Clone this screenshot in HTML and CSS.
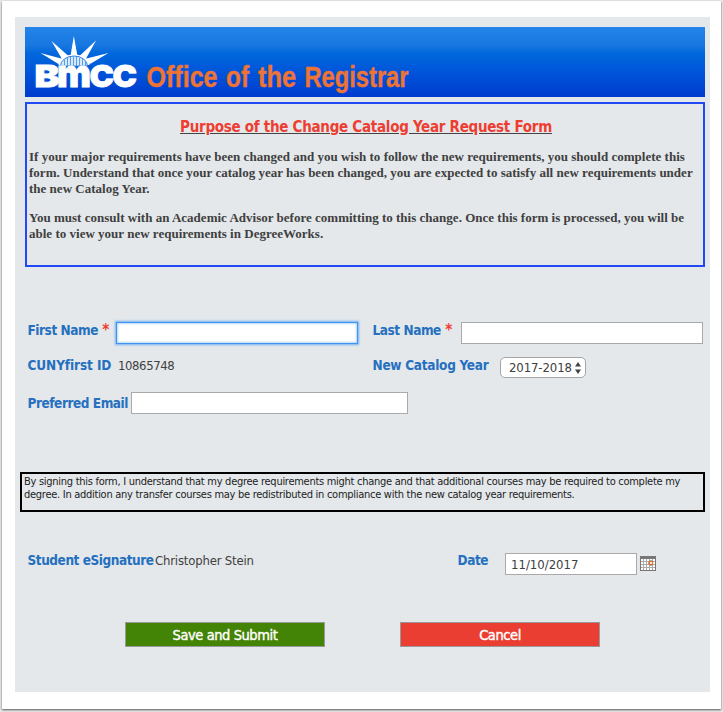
FILE: index.html
```html
<!DOCTYPE html>
<html lang="en">
<head>
<meta charset="utf-8">
<title>Change Catalog Year Request Form</title>
<link rel="stylesheet" href="styles.css">
</head>
<body>
<div class="frame">
<form class="form">
  <header class="banner">
    <svg width="680" height="70" viewBox="25 27 680 70" role="img" aria-label="BMCC Office of the Registrar">
      <g fill="#fff">
        <path d="M73.800 36 L77.500 56 H70.500Z"/>
        <path d="M51.500 41 L68.500 56 L62.500 60Z"/>
        <path d="M96 40.500 L85.500 59.500 L79.500 56Z"/>
        <path d="M40.500 53 L63 59 L58.500 64Z"/>
        <path d="M108.500 53 L90 64 L84.500 59Z"/>
        <path d="M58.500 65 A15.500 10.500 0 0 1 89.500 65Z"/>
      </g>
      <path d="M60.500 66 A13.500 10 0 0 1 87.500 66Z" fill="#d5e8fc" stroke="#2f83df" stroke-width="1"/>
      <path d="M64.500 60v6M67.500 58v8M70.500 57v9M73.500 57v9M76.500 57v9M79.500 58v8M82.500 59v7M85.500 61v5" stroke="#5a9de8" stroke-width="1"/>
      <g class="logo">
        <text x="34.500" y="87" textLength="25" lengthAdjust="spacingAndGlyphs">B</text>
        <text class="m" x="57" y="87" textLength="34" lengthAdjust="spacingAndGlyphs">m</text>
        <text x="89.500" y="87" textLength="24.500" lengthAdjust="spacingAndGlyphs">C</text>
        <text x="112.500" y="87" textLength="24.500" lengthAdjust="spacingAndGlyphs">C</text>
      </g>
      <g class="office">
        <text x="146.500" y="87" textLength="71" lengthAdjust="spacingAndGlyphs">Office</text>
        <text x="226" y="87" textLength="23" lengthAdjust="spacingAndGlyphs">of</text>
        <text x="258" y="87" textLength="38" lengthAdjust="spacingAndGlyphs">the</text>
        <text x="304.500" y="87" textLength="104" lengthAdjust="spacingAndGlyphs">Registrar</text>
      </g>
    </svg>
  </header>
  <section class="purpose">
    <h1><span>Purpose of the Change Catalog Year Request Form</span></h1>
    <p>If your major requirements have been changed and you wish to follow the new requirements, you should complete this<br>form. Understand that once your catalog year has been changed, you are expected to satisfy all new requirements under<br>the new Catalog Year.</p>
    <p>You must consult with an Academic Advisor before committing to this change. Once this form is processed, you will be<br>able to view your new requirements in DegreeWorks.</p>
  </section>
  <div class="row row-names">
    <div class="cell"><label class="w88">First Name <b class="req">*</b></label><span class="field focus"></span></div>
    <div class="cell"><label class="w88">Last Name <b class="req">*</b></label><span class="field"></span></div>
  </div>
  <div class="row row-id">
    <div class="cell"><label class="w90 cuny">CUNYfirst ID</label><span class="value number">10865748</span></div>
    <div class="cell"><label class="w127 catalog">New Catalog Year</label><span class="select">2017-2018<svg width="6" height="12" viewBox="0 0 6 12"><path d="M3 0L6 4.500H0zM3 12L0 7.500h6z" fill="#444"/></svg></span></div>
  </div>
  <div class="row row-email"><label class="w103">Preferred Email</label><span class="field email"></span></div>
  <p class="terms">By signing this form, I understand that my degree requirements might change and that additional courses may be required to complete my<br>degree. In addition any transfer courses may be redistributed in compliance with the new catalog year requirements.</p>
  <div class="row row-sign">
    <label class="w127">Student eSignature</label><span class="value signer">Christopher Stein</span>
    <label class="w47">Date</label><span class="field date">11/10/2017</span>
    <svg class="cal" width="16" height="15" viewBox="0 0 16 15"><path d="M0 0h16v15H0z" fill="#aaa"/><path d="M1 3h2v2H1zM4 3h2v2H4zM7 3h2v2H7zM1 6h2v2H1zM4 6h2v2H4zM7 6h1v2H7zM1 9h2v2H1zM4 9h2v2H4zM7 9h2v2H7zM10 10h2v1h-2zM1 12h2v2H1zM4 12h2v2H4zM7 12h2v2H7zM10 12h2v2h-2zM13 12h2v2h-2zM13 9h2v2h-2zM10 3h2v1h-2zM13 3h2v2h-2zM13 6h2v2h-2z" fill="#fff"/><path d="M0 0h16v3H0zM0 3h1v12H0zM15 3h1v12h-1zM0 14h16v1H0z" fill="#777"/><path d="M9.500 5.500h3v3h-3z" fill="#fff" stroke="#e06a20" stroke-width="1.200"/></svg>
  </div>
  <div class="row row-buttons">
    <button type="button" class="save"><span>Save and Submit</span></button>
    <button type="button" class="cancel"><span>Cancel</span></button>
  </div>
</form>
</div>
</body>
</html>
```
FILE: styles.css
```css
* { box-sizing: border-box; }
body {
  margin: 0;
  height: 712px;
  padding: 1px 2px 3px;
  background: #e9e9e9;
  font-family: Tahoma, "DejaVu Sans Condensed", "DejaVu Sans", sans-serif;
  font-stretch: condensed;
  color: #404040;
  overflow: hidden;
}
.frame {
  height: 708px;
  width: 719px;
  padding: 16px 11px 0 13px;
  background: #fff;
  box-shadow: 0 1px 2px #555;
}
.form {
  height: 675px;
  padding: 10px 5px 0 10px;
  background: #e4e8eb;
}
.banner {
  height: 70px;
  background: linear-gradient(#2484e8 0%, #1877e1 26%, #0068dc 38%, #0054d9 65%, #003bcd 100%);
}
.banner svg { display: block; }
.logo { font: 900 30.500px Inter, "Open Sans", sans-serif; fill: #fff; stroke: #fff; stroke-width: .8; }
.logo .m { font-size: 39px; }
.office {
  font: bold 30px "Liberation Sans Narrow", "Liberation Sans", sans-serif;
  fill: #ee7436;
  stroke: #ee7436;
  stroke-width: .4;
}
.purpose {
  height: 165px;
  margin-top: 5px;
  padding: 14px 2px 0;
  border: 2px solid #2149f5;
}
h1 {
  margin: 0 0 12px;
  height: 19px;
  font-size: 15px;
  line-height: 19px;
  letter-spacing: -.28px;
  text-align: center;
  color: #ee3d31;
  text-decoration: underline;
  text-decoration-color: #444;
  white-space: nowrap;
}
h1 span { margin-left: 2px; }
.purpose p {
  margin: 0 0 13px;
  font: bold 13px/16px "Liberation Serif", serif;
  letter-spacing: .01px;
  white-space: nowrap;
}
.row { display: flex; }
.cell { display: flex; flex: none; width: 345px; }
label {
  flex: none;
  margin-left: -.5px;
  margin-right: .5px;
  font-size: 13.500px;
  line-height: 17px;
  letter-spacing: -.45px;
  font-weight: bold;
  color: #2570bf;
  white-space: nowrap;
}
.cuny { letter-spacing: -.1px; }
.catalog { letter-spacing: -.28px; }
.req { color: #ee3d31; font-size: 15px; line-height: 1; margin-left: .5px; }
.w88 { width: 88px; }
.w90 { width: 90px; }
.w127 { width: 127px; }
.w103 { width: 103px; }
.w47 { width: 47px; }
.field {
  flex: none;
  display: block;
  width: 242px;
  height: 22px;
  border: 1px solid #aaa;
  background: #fff;
}
.focus { border-color: #3f94ed; box-shadow: 0 0 2px 1px #74b2f3, inset 0 0 2px 1px #b7d7f8; }
.value { font-size: 13px; line-height: 17px; white-space: nowrap; }
.number { letter-spacing: -.4px; }
.row-names { height: 35px; margin: 55px 0 0 3px; }
.row-id { height: 35px; margin-left: 3px; }
.select {
  display: flex;
  align-items: center;
  justify-content: space-between;
  width: 86px;
  height: 21px;
  padding: 0 4px 0 8px;
  border: 1px solid #a5a5a5;
  border-radius: 5px;
  background: #fff;
  font-size: 13px;
  letter-spacing: -.1px;
}
.row-email { height: 80px; margin-left: 3px; }
.row-email label { margin-top: 3px; }
.email { width: 277px; }
.terms {
  height: 40px;
  margin: 0 0 0 -5px;
  padding: 1px 2px 0;
  border: 2px solid #000;
  font-size: 11px;
  line-height: 13px;
  letter-spacing: -.275px;
  color: #222;
  white-space: nowrap;
}
.row-sign { height: 69px; margin: 41px 0 0 3px; }
.row-sign label, .row-sign .value { margin-top: -1px; }
.signer { width: 303px; letter-spacing: -.18px; }
.date { width: 132px; padding: 2px 5px 0; font-size: 13px; line-height: 17px; }
.cal { margin: 3px 0 0 3px; }
.row-buttons { gap: 75px; margin-left: 100px; }
button {
  width: 200px;
  height: 25px;
  padding: 0;
  border: 1px solid #999;
  font: inherit;
  font-size: 14.500px;
  letter-spacing: -.42px;
  -webkit-text-stroke: .4px #fff;
  color: #fff;
}
.save { background: #438305; }
.cancel { background: #e93e31; }
```
